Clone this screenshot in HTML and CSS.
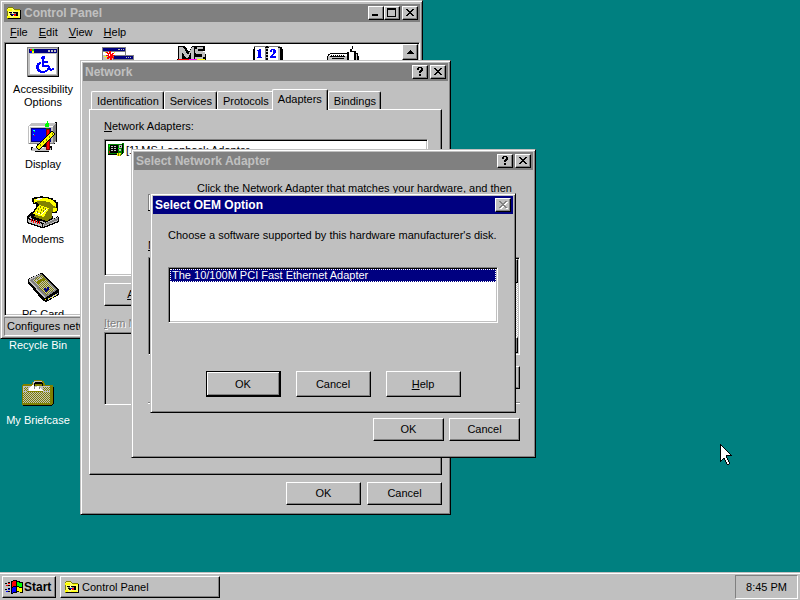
FILE: index.html
```html
<!DOCTYPE html>
<html lang="en">
<head>
<meta charset="utf-8">
<title>Desktop</title>
<link rel="stylesheet" href="styles.css">
</head>
<body>
<svg class="symbols" aria-hidden="true">
  <symbol id="close" viewBox="0 0 8 7"><path d="M0 0h2v1h1v1h2V1h1V0h2v1H7v1H6v1H5v1h1v1h1v1h1v1H6V6H5V5H3v1H2v1H0V6h1V5h1V4h1V3H2V2H1V1H0z"/></symbol>
  <symbol id="question" viewBox="0 0 6 9"><path d="M1 0h4v1h1v3H5v1H4v1H2V4h1V3h1V1H2v2H0V1h1zM2 7h2v2H2z"/></symbol>
  <symbol id="folder" viewBox="-1 0 16 16">
    <path fill="#808000" d="M0 3h1V2h5v1h1v1h6v1h1v9H0z"/>
    <path fill="#ffff66" d="M1 3h5v1h1v1h6v8H1z"/>
    <path fill="#ff0" d="M0 4h5v2H0zM8 5h5v1H8zM0 11h3v2H0zM6 12h6v1H6z"/>
    <path fill="#fff" d="M5 7h1v1H5z"/>
    <path fill="#000" d="M13 5h1v9H1v-1h12zM2 7h3v1H2zM6 7h3v1H6zM3 9h2v1H3zM4 10h2v1H4zM9 7h2v4H9z"/>
    <path fill="#808080" d="M3 8h2v1H3zM7 8h2v2H7z"/>
    <path fill="#00f" d="M5 9h2v1H5z"/><path fill="#f00" d="M7 9h2v2H7z"/>
  </symbol>
</svg>

<main class="desktop">
  <ul class="shortcuts">
    <li class="icon">
      <svg width="32" height="32" viewBox="0 0 32 32"><path fill="#c0c0c0" d="M7 5h18l-3 25H10z"/></svg>
      <span>Recycle Bin</span>
    </li>
    <li class="icon">
      <svg width="32" height="32" viewBox="0 0 32 32">
        <path fill="#808000" d="M12 2h8v1h2v2h1v2h8v3h1v16h-1v1H0V7h1V6h9V4h2z"/>
        <path fill="#000" d="M12 5h1V4h7v1h1v3h-1V6h-7v2h-1zM31 9h1v17h-1v1h-1v1H1v-1h29v-1h1z"/>
        <path fill="#c0c0c0" d="M11 4h1V3h8v1h-7v1h-1v3h-1zM1 8h28v17H1z"/>
        <path fill="url(#dither)" d="M1 14h27v11H1zM2 9h4v4H2zM21 9h7v4h-7z"/>
        <path fill="#fff" d="M7 13V10l4-4 3 4 2-3 5 6z"/>
        <path fill="#808080" d="M12 8h1v3h-1zM17 9h1v2h-1z"/>
        <path fill="#808000" d="M28 8h1v18h-1zM1 25h27v1H1zM5 13h16v1H5z"/>
        <defs><pattern id="dither" width="2" height="2" patternUnits="userSpaceOnUse"><path fill="#808000" d="M0 0h1v1H0zM1 1h1v1H1z"/><path fill="#c0c0c0" d="M1 0h1v1H1zM0 1h1v1H0z"/></pattern></defs>
      </svg>
      <span>My Briefcase</span>
    </li>
  </ul>

  <section class="window control-panel" aria-label="Control Panel">
    <header class="titlebar">
      <svg width="16" height="16"><use href="#folder"/></svg>
      <h2>Control Panel</h2>
      <button class="caption" type="button" aria-label="Minimize"><svg width="8" height="7"><path d="M0 5h6v2H0z"/></svg></button>
      <button class="caption" type="button" aria-label="Maximize"><svg width="9" height="9"><path fill-rule="evenodd" d="M0 0h9v9H0zM1 2h7v6H1z"/></svg></button>
      <button class="caption apart" type="button" aria-label="Close"><svg width="8" height="7"><use href="#close"/></svg></button>
    </header>
    <nav class="menu">
      <button type="button"><u>F</u>ile</button>
      <button type="button"><u>E</u>dit</button>
      <button type="button"><u>V</u>iew</button>
      <button type="button"><u>H</u>elp</button>
    </nav>
    <div class="sunken client">
      <ul class="applets">
        <li class="icon">
          <svg width="32" height="32" viewBox="0 0 32 32">
            <path fill="#808080" d="M0 1h32v30H0z"/><path fill="#c0c0c0" d="M1 2h29v27H1z"/>
            <path fill="#000" d="M31 1h1v30H1v-1h30z"/>
            <path fill="#000080" d="M2 3h28v4H2z"/><path fill="#fff" d="M3 8h26v20H3z"/>
            <path fill="#f00" d="M3 3h2v2H3z"/><path fill="#0f0" d="M5 3h2v2H5z"/><path fill="#00f" d="M3 5h2v2H3z"/><path fill="#ff0" d="M5 5h2v2H5z"/>
            <path fill="#c0c0c0" d="M21 4h2v2h-2zM24 4h2v2h-2zM27 4h2v2h-2z"/>
            <path fill="#00f" d="M15 10h3v3h-1v2h4v2h-4v2h5v1h1v2h1v1h1v-1h2v2h-2v1h-2v-1h-1v-2h-1v-1h-6v-8h-1v-2h1z"/>
            <path fill="#00f" d="M12 16h2v2h-1v1h-1v4h1v1h1v1h4v-1h2v-2h2v2h-1v1h-1v1h-2v1h-5v-1h-2v-1h-1v-2h-1v-4h1v-2h1z"/>
          </svg>
          <span>Accessibility Options</span>
        </li>
        <li class="icon">
          <svg width="32" height="32" viewBox="0 0 32 32">
            <path fill="#808080" d="M0 1h24v15H0zM8 9h24v15H8z"/><path fill="#fff" d="M1 6h22v3H1z"/>
            <path fill="#c0c0c0" d="M1 9h10v7H1z"/>
            <path fill="#000080" d="M1 2h22v3H1zM12 10h19v3H12z"/>
            <path fill="#c0c0c0" d="M16 3h2v1h-2zM19 3h1v1h-1zM21 3h1v1h-1zM24 11h1v1h-1zM26 11h1v1h-1zM28 11h1v1h-1z"/>
            <path fill="#ff0" d="M3 6h2v1H3zM12 6h1v1h-1zM2 10h3v1H2zM11 9h2v1h-2zM4 12h2v1H4z"/>
            <path fill="#f00" d="M7 5h2v3h1V7h2v1h-1v1h2v1h-2v1h1v2h-1v-1h-1v3H8v-3H7v1H5v-2h1v-1H4V9h2V8H5V7H4V6h2v1h1z"/><path fill="#fff" d="M7 8h1v2H7z"/>
          </svg>
        </li>
        <li class="icon">
          <svg width="32" height="32" viewBox="0 0 32 32">
            <path fill="#000" d="M1 0h7l4 6 3-6h13v5h-3l4 3v6H0v-1h1z"/>
            <path fill="#c0c0c0" d="M2 1h4l5 8 4-8h2v12h-3V6l-3 6H9L5 6v7H2zM20 1h6v2h-5v2h5v1h2v5h-2v2h-8v-2h7V8h-6V7h-1V3h2z"/>
            <path fill="#f00" d="M1 13h11v2H1z"/><path fill="#f0f" d="M12 13h8v2h-8z"/><path fill="#ff0" d="M20 13h8v2h-8z"/>
          </svg>
        </li>
        <li class="icon">
          <svg width="32" height="32" viewBox="0 0 32 32">
            <path fill="#000" d="M2 0h26v1h2v2h1v13H1V3h1z"/><path fill="#c0c0c0" d="M26 2h2v14h-2z"/>
            <path fill="#fff" d="M3 1h10v1h1v14H3zM16 2h1V1h9v15H16z"/>
            <path fill="#808080" d="M2 0h12v1H2zM16 0h12v1H16zM13 2h1v13h-1z"/><path fill="#c0c0c0" d="M14 2h2v1h-2zM14 5h2v1h-2zM14 8h2v1h-2zM14 11h2v1h-2z"/>
            <path fill="#00f" d="M7 3h2v8h1v1H5v-1h1V5H5V4h2zM19 3h4v1h1v3h-1v1h-1v1h-1v1h3v2h-6v-2h1V9h1V8h1V4h-1v2h-2V4h1z"/>
          </svg>
        </li>
        <li class="icon">
          <svg width="32" height="32" viewBox="0 0 32 32">
            <path fill="#000" d="M25 0h1v3h-1v2h4v2h2v3h1v5H0v-5h1V8h2V7h17V6h3V3h2z"/>
            <path fill="#fff" d="M3 8h17v2H2V9h1zM22 6h5v8h-5z"/><path fill="#c0c0c0" d="M1 10h19v4H1zM29 8h1v6h-1z"/>
            <path fill="#000" d="M3 10h1V9h1v1h1V9h1v1h1V9h1v1h1V9h1v1h1V9h1v1h1V9h1v1h1V9h1v1h1v1H3zM5 12h12v1H5z"/><path fill="#ff0" d="M8 14h2v1H8z"/>
          </svg>
        </li>
        <li class="icon new-row">
          <svg width="32" height="32" viewBox="0 0 32 32">
            <path fill="#000" d="M29 1h1v20h-2v2h-6v2h3v4h-3v2H8v-2H4v-3h6v-3H2v-1h26V1z"/>
            <path fill="#c0c0c0" d="M1 5l4-3h24v18l-3 3H1z"/><path fill="#808080" d="M26 5h1v18H2v-1h24zM27 22V5l2-3v17z"/>
            <path fill="#fff" d="M2 5h24v1H3v16H2z"/>
            <path fill="#000080" d="M4 7h20v14H4z"/><path fill="#00f" d="M5 8h16v12H5z"/>
            <path fill="#0ff" d="M6 9h2v1H6zM6 13h1v1H6z"/><path fill="#0f0" d="M7 10h1v1H7z"/><path fill="#f00" d="M7 14h1v1H7z"/>
            <path fill="#c0c0c0" d="M6 26h16l3 2-4 2H4z"/><path fill="#fff" d="M7 26h10v1H5z"/>
            <path fill="#800000" d="M19 8h4v21h-4z"/><path fill="#f00" d="M20 9h2v19h-2z"/>
            <path fill="#0f0" d="M20 0h1v2h1v4h-4V3h1V2h1z"/><path fill="#008000" d="M19 7h3v1h-3z"/>
            <path fill="#000" d="M25 10l4 3-17 16-4-3z"/><path fill="#ff0" d="M25 11l3 2-16 15-3-2z"/>
            <path fill="#808000" d="M22 15h1v2h-1zM19 18h1v2h-1zM16 20h1v2h-1zM13 23h1v2h-1zM25 12h1v2h-1z"/>
          </svg>
          <span>Display</span>
        </li>
        <li class="icon new-row">
          <svg width="32" height="32" viewBox="0 0 32 32">
            <path fill="#000" d="M0 21l4-5 24 6 3-3 1 3v4L17 32h-3L0 27z"/>
            <path fill="#c0c0c0" d="M1 22l4-4 24 5-13 4zM1 23l14 5v3L1 26zM31 21v4l-15 6v-3z"/>
            <path fill="#808080" d="M17 28l14-6v2l-14 6z"/>
            <path stroke="#f00" d="M4 23v3M6 24v3M8 24v3M10 25v3M12 25v3"/>
            <path fill="#000" d="M5 4V2h2V1h6V0h3v1h6v1h4v2h3v2h2v9h-1v2h-5l1 6-6 3-9-1-7-3v-3l5-8V8H6V6H5z"/>
            <path fill="#808000" d="M7 3h14l8 6v7h-4v6l-5 3-13-4 6-11z"/>
            <path fill="#ff0" d="M7 3h3V2h9l6 2 4 4v3l-4-2-3-3-6-1h-5L7 7zM12 9l10 3-5 9-11-3zM26 12h4v3l-4 1z"/>
            <path fill="#fff" d="M8 3l5-1 3 1-6 1zM13 10l7 3-5 6-6-2z"/>
            <path fill="#ff0" d="M13 10l6 3-4 5-6-2z"/>
            <path stroke="#808000" d="M13 10v2M16 11v2M18 12v2M11 12v2M14 13v2M16 14v2M10 15v2M13 16v2"/>
          </svg>
          <span>Modems</span>
        </li>
        <li class="icon new-row">
          <svg width="32" height="32" viewBox="0 0 32 32">
            <path fill="#000" d="M1 8l13-6 3 1 15 16v5l-13 7-3-1L1 12z"/>
            <path fill="#808080" d="M2 8l12-5 16 16-12 8z"/><path fill="url(#dither)" d="M6 9l9-5 13 15-9 5z"/>
            <path fill="#c0c0c0" d="M2 8l11-5v1L3 9l15 17-1 1L2 10zM20 28l11-6v1l-10 6z"/>
            <path fill="none" stroke="#c0c0c0" d="M9 10l6-3"/><path fill="#808000" d="M9 11l7-4 2 2-7 4z"/>
            <path fill="#000080" d="M17 17h2v1h1v-2h2v3h-1v1h-1v1h-2v-2h-1z"/><path fill="#ff0" d="M18 28h1v1h-1zM22 28h1v-1h-1zM25 26h1v1h-1zM28 25h1v-1h-1z"/>
          </svg>
          <span>PC Card</span>
        </li>
      </ul>
      <div class="scrollbar"><button class="bevel" type="button" aria-label="Scroll up"><svg width="7" height="4"><path d="M3 0h1v1h1v1h1v1h1v1H0V3h1V2h1V1h1z"/></svg></button></div>
    </div>
    <p class="status">Configures network hardware and software.</p>
  </section>

  <section class="window dialog network" aria-label="Network">
    <header class="titlebar">
      <h2>Network</h2>
      <button class="caption" type="button" aria-label="Help"><svg width="6" height="9"><use href="#question"/></svg></button>
      <button class="caption apart" type="button" aria-label="Close"><svg width="8" height="7"><use href="#close"/></svg></button>
    </header>
    <div class="network-body">
      <div class="tabs" role="tablist">
        <button type="button" role="tab">Identification</button>
        <button type="button" role="tab">Services</button>
        <button type="button" role="tab">Protocols</button>
        <button type="button" role="tab" aria-selected="true">Adapters</button>
        <button type="button" role="tab">Bindings</button>
      </div>
      <div class="panel" role="tabpanel">
        <p><u>N</u>etwork Adapters:</p>
        <ul class="sunken adapters">
          <li>
            <svg width="16" height="16" viewBox="0 0 16 16">
              <path fill="#008000" d="M0 2h14V1h2v10h-2v2H0z"/><path fill="#000" d="M2 3h7v8H2zM14 2h1v10h-1zM0 12h9v1H0zM9 3h1v8H9z"/>
              <path fill="#c0c0c0" d="M3 4h2v1H3zM6 4h2v1H6zM3 6h2v1H3zM6 6h2v1H6zM3 8h2v1H3zM6 8h2v1H6zM11 3h3v3h-3zM11 7h2v2h-2z"/>
              <path fill="#000" d="M12 4h1v1h-1z"/><path fill="#0f0" d="M1 3h1v2H1zM10 6h1v1h-1z"/><path fill="#ff0" d="M9 11h4v3H9z"/><path fill="#808000" d="M10 11h1v3h-1zM12 12h1v2h-1z"/><path fill="#f00" d="M1 9h1v2H1z"/>
            </svg>
            [1] MS Loopback Adapter
          </li>
        </ul>
        <div class="row"><button class="push" type="button"><u>A</u>dd...</button></div>
        <p class="disabled"><u>I</u>tem Notes:</p>
        <div class="sunken notes"></div>
      </div>
      <div class="row end">
        <button class="push" type="button">OK</button>
        <button class="push" type="button">Cancel</button>
      </div>
    </div>
  </section>

  <section class="window dialog select-adapter" aria-label="Select Network Adapter">
    <header class="titlebar">
      <h2>Select Network Adapter</h2>
      <button class="caption" type="button" aria-label="Help"><svg width="6" height="9"><use href="#question"/></svg></button>
      <button class="caption apart" type="button" aria-label="Close"><svg width="8" height="7"><use href="#close"/></svg></button>
    </header>
    <div class="select-body">
      <div class="intro">
        <svg width="32" height="32" viewBox="0 0 32 32"><path fill="#808080" d="M0 12h31v17H0z"/><path fill="#fff" d="M1 13h29v15H1z"/><path d="M0 28h31v1H0z"/></svg>
        <p>Click the Network Adapter that matches your hardware, and then</p>
      </div>
      <p><u>N</u>etwork Adapter:</p>
      <div class="sunken list">
        <div class="scrollbar track">
          <button class="bevel" type="button" aria-label="Scroll up"></button>
          <button class="bevel" type="button" aria-label="Scroll down"></button>
        </div>
      </div>
      <div class="row end"><button class="push" type="button" aria-label="Have disk"></button></div>
      <hr>
      <div class="row end">
        <button class="push" type="button">OK</button>
        <button class="push" type="button">Cancel</button>
      </div>
    </div>
  </section>

  <section class="window dialog oem" aria-label="Select OEM Option">
    <header class="titlebar active">
      <h2>Select OEM Option</h2>
      <button class="caption" type="button" aria-label="Close" disabled><svg width="8" height="7"><use href="#close"/></svg></button>
    </header>
    <div class="oem-body">
      <label for="option">Choose a software supported by this hardware manufacturer's disk.</label>
      <select class="sunken" id="option" size="4">
        <option selected>The 10/100M PCI Fast Ethernet Adapter</option>
      </select>
      <div class="row actions">
        <button class="push default" type="button">OK</button>
        <button class="push" type="button">Cancel</button>
        <button class="push" type="button"><u>H</u>elp</button>
      </div>
    </div>
  </section>

  <svg class="cursor" width="12" height="21" viewBox="0 0 12 21" aria-hidden="true">
    <path d="M0 0h1v1h1v1h1v1h1v1h1v1h1v1h1v1h1v1h1v1h1v1h1v1h1v1H7v2h1v2h1v2h1v2H9v1H7v-1H6v-2H5v-2H4v-1H3v1H2v1H1v1H0z"/>
    <path fill="#fff" d="M1 2h1v1h1v1h1v1h1v1h1v1h1v1h1v1h1v1h1v1H6v3h1v2h1v2h1v2H7v-2H6v-2H5v-2H3v1H2v1H1z"/>
  </svg>
</main>

<footer class="taskbar">
  <button class="bevel start" type="button"><svg width="18" height="16" viewBox="0 0 18 16">
      <path d="M6 2h2V1h4v1h3v1h3v11h-3v-1h-3v1H8v1H6zM3 3h2v1H3zM3 6h2v1H3zM3 9h2v1H3zM3 12h2v1H3zM0 4h2v1H0zM0 10h2v1H0z"/>
      <path fill="#f00" d="M7 3h1V2h3v5H8v1H7zM1 6h2v1H1zM3 4h2v1H3z"/><path fill="#0f0" d="M12 3h2v1h3v4h-3V7h-2z"/>
      <path fill="#00f" d="M7 9h1V8h3v5H8v1H7zM1 12h2v1H1zM3 10h2v1H3z"/><path fill="#ff0" d="M12 8h2v1h3v4h-3v-1h-2z"/>
    </svg>Start</button>
  <button class="bevel task" type="button"><svg width="16" height="16"><use href="#folder"/></svg>Control Panel</button>
  <time class="clock">8:45 PM</time>
</footer>
</body>
</html>
```
FILE: styles.css
```css
* { box-sizing: border-box; }

body {
  margin: 0;
  height: 100vh;
  display: flex;
  flex-direction: column;
  overflow: hidden;
  background: #008080;
  color: #000;
  font: 11px/13px "Liberation Sans", Arial, sans-serif;
  cursor: default;
}

h2, p, ul { margin: 0; padding: 0; font: inherit; list-style: none; }
svg { display: block; flex: none; shape-rendering: crispEdges; }
u { text-underline-offset: 1px; text-decoration-thickness: 1px; text-decoration-skip-ink: none; }
.symbols { position: absolute; width: 0; height: 0; }

button, select { font: inherit; color: inherit; border-radius: 0; outline: 0; }
button {
  display: flex;
  align-items: center;
  justify-content: center;
  margin: 0;
  padding: 0;
  border: 0;
  background: #c0c0c0;
  white-space: nowrap;
}

/* Raised and sunken edges */
.bevel, .push, .caption {
  border: 1px solid;
  border-color: #fff #000 #000 #fff;
  box-shadow: inset -1px -1px #808080;
}
.sunken {
  border: 1px solid;
  border-color: #808080 #fff #fff #808080;
  background: #fff;
  box-shadow: inset 1px 1px #000, inset -1px -1px #c0c0c0;
  padding: 1px;
}

/* Desktop */
.desktop { position: relative; flex: 1; min-height: 0; }
.shortcuts { width: 76px; padding-top: 303px; color: #fff; }
.icon {
  height: 75px;
  display: flex;
  flex-direction: column;
  align-items: center;
  gap: 5px;
  text-align: center;
}
.shortcuts .icon { gap: 4px; }

/* Windows */
.window {
  position: absolute;
  padding: 2px;
  border: 1px solid;
  border-color: #c0c0c0 #000 #000 #c0c0c0;
  background: #c0c0c0;
  box-shadow: inset 1px 1px #fff, inset -1px -1px #808080;
}
.titlebar {
  height: 18px;
  padding: 0 2px;
  display: flex;
  align-items: center;
  background: #808080;
  color: #c0c0c0;
}
.titlebar h2 {
  flex: 1;
  font-size: 12px;
  font-weight: bold;
  white-space: nowrap;
}
.titlebar svg + h2 { padding-left: 2px; }
.titlebar.active { background: #000080; color: #fff; }
.caption { width: 16px; height: 14px; color: #000; padding: 0 1px 1px 0; }
.caption.apart { margin-left: 2px; }
.caption svg { fill: #000; }
.caption:disabled svg { fill: #808080; filter: drop-shadow(1px 1px 0 #fff); }

.row { display: flex; gap: 6px; }
.row.end { justify-content: flex-end; }
.push { width: 75px; height: 23px; }

/* Control Panel */
.control-panel { left: 0; top: 0; width: 423px; padding: 3px 2px 2px 3px; }
.menu { height: 20px; display: flex; }
.menu button { padding: 0 5px 0 6px; }
.client { height: 274px; display: flex; overflow: hidden; }
.applets {
  flex: 1;
  padding-top: 2px;
  display: grid;
  grid-template-columns: repeat(5, 74px);
  grid-auto-rows: 75px;
  column-gap: 1px;
}
.new-row { grid-column: 1; }
.scrollbar { width: 16px; background: #dfdfdf; }
.scrollbar button { width: 16px; height: 16px; }
.status {
  margin-top: 1px;
  padding: 2px;
  border: 1px solid;
  border-color: #808080 #fff #fff #808080;
}

/* Network */
.network { left: 80px; top: 60px; width: 371px; }
.network-body { padding: 8px 6px 7px; }
.tabs { height: 20px; padding: 2px 2px 0; display: flex; }
.tabs button {
  height: 18px;
  padding: 1px 4px 0 5px;
  border: 1px solid;
  border-color: #fff #000 transparent #fff;
  border-radius: 2px 2px 0 0;
  border-bottom: 0;
  box-shadow: inset -1px 0 #808080;
}
.tabs [aria-selected] {
  position: relative;
  height: 21px;
  margin: -2px 0 0 -2px;
  padding: 0 5px 2px;
}
.panel {
  height: 366px;
  margin-bottom: 7px;
  padding: 10px 13px 0 14px;
  border: 1px solid;
  border-color: #fff #000 #000 #fff;
  box-shadow: inset -1px -1px #808080;
}
.adapters { height: 137px; margin: 6px 0 7px; }
.adapters li { display: flex; gap: 2px; padding: 1px 2px; align-items: center; }
.disabled { margin: 11px 0 2px; color: #808080; text-shadow: 1px 1px #fff; }
.notes { height: 73px; background: #c0c0c0; }

/* Select Network Adapter */
.select-adapter { left: 131px; top: 149px; width: 405px; }
.select-body { padding: 12px 13px 14px 14px; }
.intro { display: flex; gap: 17px; height: 57px; }
.list { height: 98px; margin: 5px 0 11px; display: flex; justify-content: flex-end; }
.track {
  display: flex;
  flex-direction: column;
  justify-content: space-between;
  background: repeating-conic-gradient(#fff 0 25%, #c0c0c0 0 50%) 0 0 / 2px 2px;
}
.track button:first-child { height: 24px; }
.select-body .push { width: 71px; }
.select-body .row { gap: 5px; }
.select-body hr {
  margin: 13px 0 14px;
  border: 0;
  border-top: 1px solid #808080;
  border-bottom: 1px solid #fff;
}

/* Select OEM Option */
.oem { left: 150px; top: 193px; width: 366px; }
.oem-body { padding: 15px 15px 13px; display: flex; flex-direction: column; }
.oem-body label { margin-bottom: 25px; white-space: nowrap; }
.oem-body select { appearance: none; height: 56px; overflow: hidden; }
.oem-body option { min-height: 13px; padding: 0 2px; line-height: 13px; }
.oem-body option:checked {
  background: #000080 linear-gradient(#000080, #000080);
  color: #fff;
  outline: 1px dotted #fff;
  outline-offset: -1px;
}
.actions { margin-top: 48px; justify-content: center; gap: 15px; }
.actions .push { height: 26px; }
.push.default {
  border-color: #000;
  box-shadow: inset -1px -1px #000, inset 1px 1px #fff, inset -2px -2px #808080;
}

.cursor { position: absolute; left: 720px; top: 444px; }

/* Taskbar */
.taskbar {
  height: 28px;
  padding: 2px;
  display: flex;
  align-items: center;
  gap: 4px;
  background: #c0c0c0;
  border-top: 1px solid #c0c0c0;
  box-shadow: inset 0 1px #fff;
}
.taskbar button { height: 22px; margin-top: 1px; }
.start {
  width: 54px;
  gap: 1px;
  font-size: 12px;
  font-weight: bold;
}
.start, .task { justify-content: flex-start; }
.taskbar .start { padding-left: 2px; }
.taskbar .task { width: 160px; padding-left: 3px; gap: 2px; }
.clock {
  margin-left: auto;
  padding: 5px 10px 4px;
  border: 1px solid;
  border-color: #808080 #fff #fff #808080;
}
```
